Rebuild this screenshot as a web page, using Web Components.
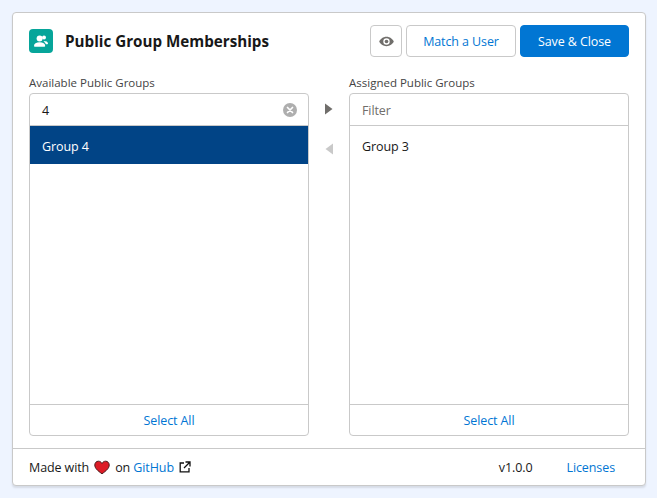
<!DOCTYPE html>
<html>
<head>
<meta charset="utf-8">
<style>
  html, body { margin: 0; height: 100%; background: #eef4ff; }
  body { padding: 12px 11px 12px 12px; box-sizing: border-box; font: 12.5px "Open Sans", "Noto Sans", sans-serif; letter-spacing: -.1px; color: #181818; overflow: hidden; }
</style>
</head>
<body>
<membership-card>
  <card-header slot="header" title="Public Group Memberships"></card-header>
  <list-panel slot="left" label="Available Public Groups" value="4" selected="Group 4"></list-panel>
  <move-arrows slot="middle"></move-arrows>
  <list-panel slot="right" label="Assigned Public Groups" placeholder="Filter" item="Group 3"></list-panel>
  <card-footer slot="footer"></card-footer>
</membership-card>

<script>
class MembershipCard extends HTMLElement {
    constructor() {
        super();
        this.attachShadow({mode: 'open'}).innerHTML = `
        <style>
            :host { display: flex; flex-direction: column; height: 474px; box-sizing: border-box; background: #fff;
                border: 1px solid #c9c9c9; border-radius: 4px; box-shadow: 0 2px 2px rgba(0,0,0,.1); }
            .body { flex: 1; display: grid; grid-template-columns: 280px 40px 280px; padding: 0 16px 12px; min-height: 0; }
        </style>
        <slot name="header"></slot>
        <div class="body">
            <slot name="left"></slot>
            <slot name="middle"></slot>
            <slot name="right"></slot>
        </div>
        <slot name="footer"></slot>`;
    }
}

class CardHeader extends HTMLElement {
    constructor() {
        super();
        this.attachShadow({mode: 'open'}).innerHTML = `
        <style>
            :host { display: flex; align-items: center; padding: 12px 16px 0; height: 44px; box-sizing: border-box; margin-bottom: 16px; }
            .icon { width: 24px; height: 24px; border-radius: 4px; background: #06a59a; display: flex; align-items: center; justify-content: center; margin-right: 12px; }
            h1 { flex: 1; margin: 0; font-size: 15.2px; font-weight: 700; letter-spacing: 0; color: #181818; }
            button { font: inherit; letter-spacing: inherit; height: 32px; box-sizing: border-box; border: 1px solid #c9c9c9; background: #fff; border-radius: 4px; color: #0176d3; padding: 0; display: flex; align-items: center; justify-content: center; }
            .eye { width: 32px; margin-right: 4px; }
            .match { width: 110px; margin-right: 4px; }
            .save { width: 109px; background: #0176d3; border-color: #0176d3; color: #fff; }
        </style>
        <div class="icon">
            <svg width="16" height="16" viewBox="0 0 16 16" fill="#fff">
                <circle cx="6.600" cy="5.400" r="3"/>
                <path d="M1 13c0-2.600 2.200-3.800 5.600-3.800s5.600 1.200 5.600 3.800c0 .5-.3.8-.8.8H1.800c-.5 0-.8-.3-.8-.8z"/>
                <circle cx="11" cy="4.600" r="2"/>
                <path d="M10.500 8c2.600 0 4.500.8 4.500 2.600 0 .4-.3.7-.7.7h-1.400c-.4-1.200-1.200-2-2.400-3.300z"/>
            </svg>
        </div>
        <h1>${this.getAttribute("title")}</h1>
        <button class="eye">
            <svg width="15" height="15" viewBox="0 0 14 14"><path fill="#706e6b" d="M7 2.600C3.800 2.600 1.200 4.700.2 7c1 2.300 3.600 4.400 6.800 4.400s5.800-2.100 6.800-4.400C12.800 4.700 10.200 2.600 7 2.600zM7 10a3 3 0 1 1 0-6 3 3 0 0 1 0 6z"/><circle cx="7" cy="7" r="1.700" fill="#706e6b"/></svg>
        </button>
        <button class="match">Match a User</button>
        <button class="save">Save &amp; Close</button>`;
    }
}

class ListPanel extends HTMLElement {
    constructor() {
        super();
        const value = this.getAttribute("value");
        const selected = this.getAttribute("selected");
        const item = this.getAttribute("item");
        this.attachShadow({mode: 'open'}).innerHTML = `
        <style>
            :host { display: flex; flex-direction: column; min-height: 0; height: 100%; }
            label { font-size: 11.5px; letter-spacing: 0; color: #444; line-height: 20px; height: 20px; }
            .box { flex: 1; display: flex; flex-direction: column; border: 1px solid #c9c9c9; border-radius: 4px; overflow: hidden; }
            .search { height: 31px; flex: none; display: flex; align-items: center; padding: 0 11px 0 12px; border-bottom: 1px solid #c9c9c9; }
            .search span { flex: 1; color: #181818; padding-top: 1px; }
            .search .ph { color: #706e6b; }
            .list { flex: 1; }
            .row { height: 38px; box-sizing: border-box; padding: 2px 12px 0; display: flex; align-items: center; }
            .row.sel { background: #014486; color: #fff; }
            .foot { height: 30px; flex: none; border-top: 1px solid #c9c9c9; display: flex; align-items: center; justify-content: center; color: #0176d3; }
        </style>
        <label>${this.getAttribute("label")}</label>
        <div class="box">
            <div class="search">
                <span class="${value ? '' : 'ph'}">${value || this.getAttribute("placeholder")}</span>
                ${value ? `<svg width="14" height="14" viewBox="0 0 14 14"><circle cx="7" cy="7" r="7" fill="#aeaeae"/><path d="M4.500 4.500l5 5m0-5l-5 5" stroke="#fff" stroke-width="1.700" stroke-linecap="round"/></svg>` : ''}
            </div>
            <div class="list">
                ${selected ? `<div class="row sel">${selected}</div>` : ''}
                ${item ? `<div class="row">${item}</div>` : ''}
            </div>
            <div class="foot">Select All</div>
        </div>`;
    }
}

class MoveArrows extends HTMLElement {
    constructor() {
        super();
        this.attachShadow({mode: 'open'}).innerHTML = `
        <style>
            :host { display: flex; flex-direction: column; align-items: center; padding-top: 30px; gap: 28px; }
            svg { display: block; }
        </style>
        <svg width="12" height="12" viewBox="0 0 12 12"><path fill="#706e6b" d="M2 .5v11L9.500 6z"/></svg>
        <svg width="12" height="12" viewBox="0 0 12 12"><path fill="#c9c9c9" d="M10 .5v11L2.500 6z"/></svg>`;
    }
}

class CardFooter extends HTMLElement {
    constructor() {
        super();
        this.attachShadow({mode: 'open'}).innerHTML = `
        <style>
            :host { display: flex; align-items: center; height: 37px; box-sizing: border-box; border-top: 1px solid #c9c9c9; padding: 0 16px; color: #181818; }
            a { color: #0176d3; text-decoration: none; }
            .heart { margin: 0 5px; display: block; }
            .ext { margin-left: 5px; display: block; }
            .space { flex: 1; }
            .lic { margin-left: 34px; margin-right: 14px; }
        </style>
        <span>Made with</span>
        <svg class="heart" width="16" height="15" viewBox="0 0 16 15"><path fill="#dd1c26" stroke="#4a1a1c" stroke-width="1" d="M8 13.800C3.500 10.600.8 8.200.8 5 .8 2.800 2.400 1.200 4.400 1.200c1.500 0 2.800.8 3.600 2.300.8-1.500 2.100-2.300 3.600-2.300 2 0 3.600 1.600 3.600 3.800 0 3.200-2.700 5.600-7.200 8.800z"/></svg>
        <span>on&nbsp;<a>GitHub</a></span>
        <svg class="ext" width="12" height="12" viewBox="0 0 12 12" fill="none" stroke="#111" stroke-width="1.300"><path d="M5 2H1.200v8.800H10V7M6.500 1h4.500v4.500M11 1L5 7"/></svg>
        <span class="space"></span>
        <span>v1.0.0</span>
        <a class="lic">Licenses</a>`;
    }
}

window.customElements.define("membership-card", MembershipCard)
window.customElements.define("card-header", CardHeader)
window.customElements.define("list-panel", ListPanel)
window.customElements.define("move-arrows", MoveArrows)
window.customElements.define("card-footer", CardFooter)
</script>
</body>
</html>
